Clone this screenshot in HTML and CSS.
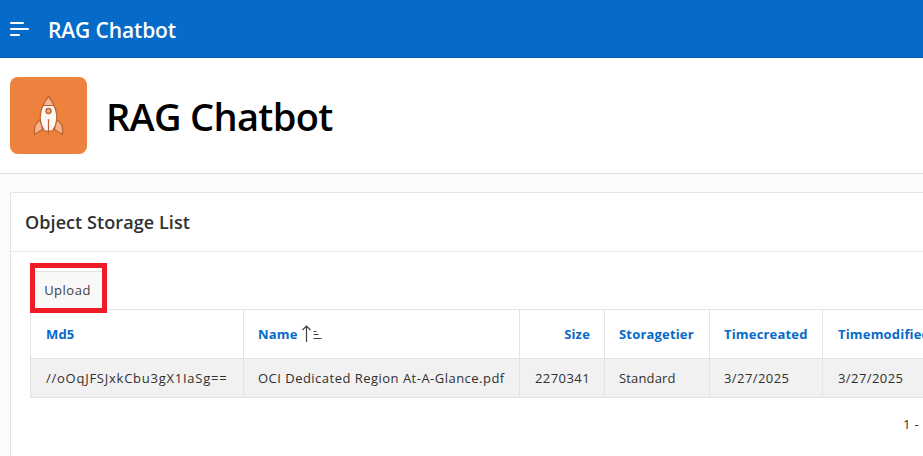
FILE: index.html
```html
<!DOCTYPE html>
<html lang="en">
<head>
<meta charset="utf-8">
<title>RAG Chatbot</title>
<link rel="stylesheet" href="styles.css">
</head>
<body>
<header class="topbar">
  <svg class="menu-icon" width="20" height="16" viewBox="0 0 20 16" fill="none" stroke="#fff" stroke-width="2" stroke-linecap="round"><path d="M2 2h12M2 8h17M2 14h8"/></svg>
  <span class="brand">RAG Chatbot</span>
</header>
<section class="hero">
  <div class="app-icon">
    <svg width="77" height="77" viewBox="0 0 77 77" stroke="#bd6430" stroke-width="1.2" stroke-linejoin="round" stroke-linecap="round">
      <path d="M31 42.5c-4 2.500-6.500 5.500-6.500 9v6l8-5zM46 42.500c4 2.500 6.500 5.500 6.500 9v6l-8-5z" fill="#f5b48d"/>
      <path d="M33.200 28.500h10.600c2.400 4.500 3.200 9 2.900 14-.2 4-1.800 8-4.200 11.500h-8c-2.400-3.500-4-7.500-4.200-11.500-.3-5 .5-9.500 2.900-14z" fill="#fdf8f4"/>
      <path d="M33 28.500c1.200-3.200 3-6.200 5.500-9 2.500 2.800 4.300 5.800 5.500 9z" fill="#f5b48d"/>
      <circle cx="38.500" cy="34" r="2.500" fill="#f5b48d" stroke-width="1.400"/>
      <path d="M38.500 42.500v14.500"/>
    </svg>
  </div>
  <h1 class="title">RAG Chatbot</h1>
</section>
<main class="content">
  <section class="region">
    <h2 class="region-title"><span>Object Storage List</span></h2>
    <div class="region-body">
      <div class="toolbar">
        <button class="upload" type="button"><span>Upload</span></button>
        <div class="highlight"></div>
      </div>
      <table class="report">
        <colgroup><col class="c-md5"><col class="c-name"><col class="c-size"><col class="c-tier"><col class="c-created"><col class="c-modified"></colgroup>
        <thead><tr>
          <th class="first">Md5</th>
          <th><span class="sort"><span>Name</span><svg width="20" height="18" viewBox="0 0 20 18" fill="none" stroke="#404040" stroke-width="1.200"><path d="M4.500 17V1M.5 5l4-4 4 4M11.500 6.500h3M11.500 9.500h5M11.500 13.500h8"/></svg></span></th>
          <th class="num">Size</th>
          <th>Storagetier</th>
          <th>Timecreated</th>
          <th class="last">Timemodified</th>
        </tr></thead>
        <tbody><tr>
          <td class="hash first">//oOqJFSJxkCbu3gX1IaSg==</td>
          <td class="file">OCI Dedicated Region At-A-Glance.pdf</td>
          <td class="num">2270341</td>
          <td class="tier">Standard</td>
          <td>3/27/2025</td>
          <td class="last">3/27/2025</td>
        </tr></tbody>
      </table>
      <div class="pagination">1 -</div>
    </div>
  </section>
</main>
</body>
</html>
```
FILE: styles.css
```css
* { box-sizing: border-box; }
body {
  margin: 0;
  height: 456px;
  overflow: hidden;
  background: #fcfcfc;
  color: #303030;
  font-family: "Open Sans", "Noto Sans", sans-serif;
  font-size: 13px;
}
.topbar {
  display: flex;
  align-items: center;
  height: 58px;
  padding-left: 9px;
  background: #056ac8;
  border-bottom: 1px solid #045fb4;
  color: #fff;
}
.menu-icon { margin-right: 19px; }
.brand { font-size: 21px; font-weight: 600; letter-spacing: -0.12px; line-height: 28px; padding-top: 3px; }
.hero {
  display: flex;
  align-items: center;
  gap: 19px;
  height: 116px;
  padding-left: 10px;
  background: #fff;
  border-bottom: 1px solid #e2e2e2;
}
.app-icon { width: 77px; height: 77px; border-radius: 8px; background: #ed813e; }
.app-icon svg { display: block; }
.title { margin: 0; font-size: 38px; font-weight: 600; letter-spacing: -0.68px; line-height: 50px; color: #000; white-space: nowrap; }
.content { padding: 18px 0 0 10px; }
.region {
  height: 264px;
  background: #fff;
  border: 1px solid #e4e4e4;
  border-right: 0;
  border-bottom: 0;
  border-top-left-radius: 2px;
}
.region-title {
  display: flex;
  align-items: center;
  height: 59px;
  margin: 0;
  padding-left: 14px;
  border-bottom: 1px solid #e6e6e6;
  font-size: 18px;
  font-weight: 600;
  letter-spacing: 0.08px;
}
.region-body { padding: 19px 0 0 19px; overflow: hidden; }
.toolbar { position: relative; height: 38px; }
.upload {
  display: block;
  width: 75px;
  height: 38px;
  padding: 0 0 2px;
  border: 1px solid #e0e0e0;
  border-bottom: 0;
  background: #f8f8f8;
  color: #404040;
  font: inherit;
  letter-spacing: 0.5px;
}
.highlight {
  position: absolute;
  left: 0;
  top: -8px;
  width: 77px;
  height: 50px;
  border: 5px solid #ee1c25;
}
.report {
  table-layout: fixed;
  width: 893px;
  border-spacing: 0;
  border-left: 1px solid #e4e4e4;
  border-top: 1px solid #e4e4e4;
}
.c-md5 { width: 213px; }
.c-name { width: 276px; }
.c-size { width: 85px; }
.c-tier { width: 105px; }
.c-created { width: 113px; }
.c-modified { width: 100px; }
.report th, .report td {
  padding: 0 14px;
  border-right: 1px solid #e4e4e4;
  border-bottom: 1px solid #e4e4e4;
  text-align: left;
  white-space: nowrap;
}
.report .first, .report .last { padding-left: 15px; }
.report .last { padding-right: 0; border-right: 0; overflow: hidden; }
.report th { height: 49px; color: #056ac8; font-weight: 700; letter-spacing: 0.18px; }
.report td { height: 39px; background: #f1f1f1; letter-spacing: 0.42px; }
.report .hash { letter-spacing: 0.75px; }
.report .file { letter-spacing: 0.48px; }
.report .tier { letter-spacing: 0.15px; }
.report .num { text-align: right; }
.sort { display: flex; align-items: center; gap: 4px; }
.pagination { padding: 17px 0 0 873px; line-height: 18px; white-space: nowrap; letter-spacing: 0.4px; }
```
